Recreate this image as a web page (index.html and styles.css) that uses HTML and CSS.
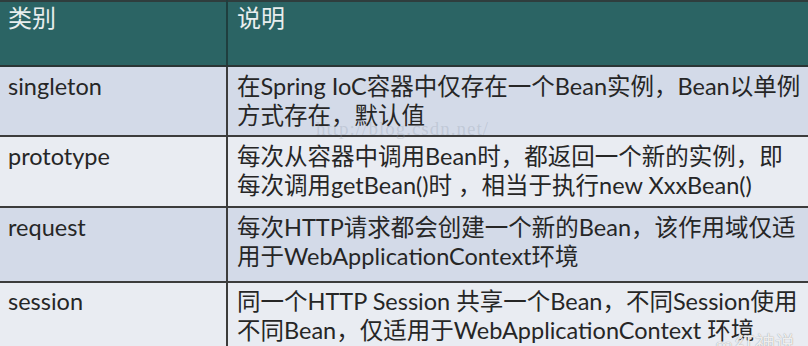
FILE: index.html
```html
<!DOCTYPE html>
<html lang="zh">
<head>
<meta charset="utf-8">
<link rel="stylesheet" href="styles.css">
</head>
<body>
<div class="page">
<table class="scope">
  <colgroup><col class="c1"><col class="c2"></colgroup>
  <thead>
    <tr class="head"><th>类别</th><th>说明</th></tr>
  </thead>
  <tbody>
    <tr class="r1 dark"><td>singleton</td><td>在Spring IoC容器中仅存在一个Bean实例，Bean以单例<br>方式存在，默认值</td></tr>
    <tr class="r2 light"><td>prototype</td><td>每次从容器中调用Bean时，都返回一个新的实例，即<br>每次调用getBean()时 ，相当于执行new XxxBean()</td></tr>
    <tr class="r3 dark"><td>request</td><td>每次HTTP请求都会创建一个新的Bean，该作用域仅适<br>用于WebApplicationContext环境</td></tr>
    <tr class="r4 light"><td>session</td><td>同一个HTTP Session 共享一个Bean，不同Session使用<br>不同Bean，仅适用于WebApplicationContext 环境</td></tr>
  </tbody>
</table>
<div class="mark">http://blog.csdn.net/</div>
<div class="brand"><span class="logo">∞</span>红神说</div>
</div>
</body>
</html>
```
FILE: styles.css
```css
html, body {
  margin: 0;
  padding: 0;
  background: #e9ecf2;
  overflow: hidden;
}
.page {
  position: relative;
  width: 808px;
  height: 346px;
  overflow: hidden;
}
.scope {
  border-collapse: collapse;
  width: 830px;
  table-layout: fixed;
  font-family: Lato, "Noto Sans CJK SC", sans-serif;
  font-size: 23.5px;
  color: #262626;
  border-top: 2px solid #2f3d3d;
  white-space: nowrap;
}
.c1 { width: 227px; }
.scope th, .scope td {
  text-align: left;
  vertical-align: top;
  padding: 0 0 0 8px;
  line-height: 29px;
  border-bottom: 2px solid #3c3c3c;
  border-right: 2px solid #3c3c3c;
}
.scope th + th, .scope td + td {
  padding-left: 9px;
}
.head th {
  height: 65px;
  background: #2b6464;
  color: #e8eeee;
  font-weight: normal;
  font-size: 24px;
  padding-top: 1px;
  box-sizing: border-box;
  border-right-color: #1f3e3e;
  border-bottom-color: #2a3535;
}
.dark td { background: #d3dae8; }
.light td { background: #e9ecf2; }
.r1 td { height: 70px; padding-top: 5px; box-sizing: border-box; }
.r2 td { height: 71px; padding-top: 5px; box-sizing: border-box; }
.r3 td { height: 75px; padding-top: 5px; box-sizing: border-box; }
.r4 td { height: 70px; padding-top: 4px; box-sizing: border-box; border-bottom: none; }
.mark {
  position: absolute;
  left: 316px;
  top: 118px;
  font-family: "Liberation Serif", serif;
  font-size: 19px;
  color: rgba(150, 160, 175, 0.3);
  letter-spacing: 1px;
}
.brand {
  position: absolute;
  left: 716px;
  top: 328px;
  font-family: "Noto Sans CJK SC", sans-serif;
  font-size: 20px;
  color: rgba(255, 255, 255, 0.85);
  text-shadow: 0 0 1px #888;
}
.logo {
  font-size: 16px;
  margin-right: 3px;
}
```
